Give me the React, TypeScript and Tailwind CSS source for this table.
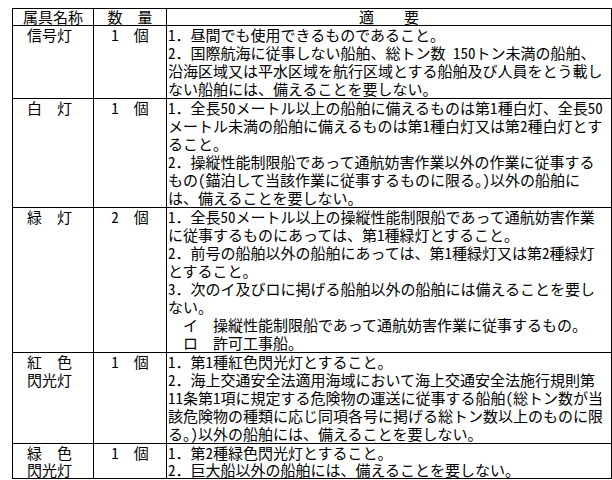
import React from "react";

type Row = { name: string[]; qty: string; lines: string[]; lh?: string };

const rows: Row[] = [
  {
    name: ["信号灯"],
    qty: "1　個",
    lines: [
      "1．昼間でも使用できるものであること。",
      "2．国際航海に従事しない船舶、総トン数 150トン未満の船舶、",
      "沿海区域又は平水区域を航行区域とする船舶及び人員をとう載し",
      "ない船舶には、備えることを要しない。",
    ],
  },
  {
    name: ["白　灯"],
    qty: "1　個",
    lines: [
      "1．全長50メートル以上の船舶に備えるものは第1種白灯、全長50",
      "メートル未満の船舶に備えるものは第1種白灯又は第2種白灯とす",
      "ること。",
      "2．操縦性能制限船であって通航妨害作業以外の作業に従事する",
      "もの(錨泊して当該作業に従事するものに限る。)以外の船舶に",
      "は、備えることを要しない。",
    ],
  },
  {
    name: ["緑　灯"],
    qty: "2　個",
    lines: [
      "1．全長50メートル以上の操縦性能制限船であって通航妨害作業",
      "に従事するものにあっては、第1種緑灯とすること。",
      "2．前号の船舶以外の船舶にあっては、第1種緑灯又は第2種緑灯",
      "とすること。",
      "3．次のイ及びロに掲げる船舶以外の船舶には備えることを要し",
      "ない。",
      "　イ　操縦性能制限船であって通航妨害作業に従事するもの。",
      "　ロ　許可工事船。",
    ],
  },
  {
    name: ["紅　色", "閃光灯"],
    qty: "1　個",
    lines: [
      "1．第1種紅色閃光灯とすること。",
      "2．海上交通安全法適用海域において海上交通安全法施行規則第",
      "11条第1項に規定する危険物の運送に従事する船舶(総トン数が当",
      "該危険物の種類に応じ同項各号に掲げる総トン数以上のものに限",
      "る。)以外の船舶には、備えることを要しない。",
    ],
  },
  {
    name: ["緑　色", "閃光灯"],
    qty: "1　個",
    lh: "leading-[17px]",
    lines: [
      "1．第2種緑色閃光灯とすること。",
      "2．巨大船以外の船舶には、備えることを要しない。",
    ],
  },
];

function T({ s }: { s: string }) {
  const parts = s.split(/([\x20-\x7E]+)/).filter((p) => p.length > 0);
  return (
    <>
      {parts.map((p, i) =>
        /^[\x20-\x7E]+$/.test(p) ? (
          <span key={i} className="[font-feature-settings:'hwid']">
            {p}
          </span>
        ) : (
          <React.Fragment key={i}>{p}</React.Fragment>
        )
      )}
    </>
  );
}

export default function App() {
  return (
    <div className="w-[612px] h-[480px] bg-white overflow-hidden pt-[8px] pl-[12px] text-black">
      <div
        className="grid grid-cols-[81px_73px_445px] w-[600px] border-l border-t border-black text-[15px] leading-[18px] whitespace-pre"
        style={{ fontFamily: '"Noto Sans CJK JP", "Noto Sans", sans-serif' }}
      >
        <div className="border-r border-b border-black text-center leading-[16px]">属具名称</div>
        <div className="border-r border-b border-black text-center leading-[16px]">数　量</div>
        <div className="border-r border-b border-black text-center leading-[16px]">適　　要</div>
        {rows.map((r, i) => (
          <React.Fragment key={i}>
            <div className={`border-r border-b border-black pl-[14px] ${r.lh ?? ""}`}>
              {r.name.map((n, j) => (
                <div key={j}>{n}</div>
              ))}
            </div>
            <div className={`border-r border-b border-black text-center ${r.lh ?? ""}`}>
              <T s={r.qty} />
            </div>
            <div className={`border-r border-b border-black pl-[1px] ${r.lh ?? ""}`}>
              {r.lines.map((l, j) => (
                <div key={j}>
                  <T s={l} />
                </div>
              ))}
            </div>
          </React.Fragment>
        ))}
      </div>
    </div>
  );
}
